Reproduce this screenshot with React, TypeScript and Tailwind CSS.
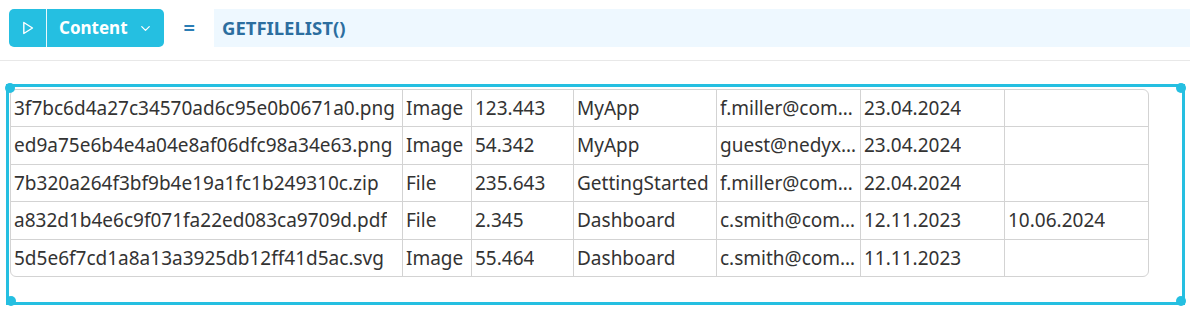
import { ChevronDown } from "lucide-react";

const rows = [
  ["3f7bc6d4a27c34570ad6c95e0b0671a0.png", "Image", "123.443", "MyApp", "f.miller@company.com", "23.04.2024", ""],
  ["ed9a75e6b4e4a04e8af06dfc98a34e63.png", "Image", "54.342", "MyApp", "guest@nedyx.com", "23.04.2024", ""],
  ["7b320a264f3bf9b4e19a1fc1b249310c.zip", "File", "235.643", "GettingStarted", "f.miller@company.com", "22.04.2024", ""],
  ["a832d1b4e6c9f071fa22ed083ca9709d.pdf", "File", "2.345", "Dashboard", "c.smith@company.com", "12.11.2023", "10.06.2024"],
  ["5d5e6f7cd1a8a13a3925db12ff41d5ac.svg", "Image", "55.464", "Dashboard", "c.smith@company.com", "11.11.2023", ""],
];

const colWidths = ["w-[391px]", "w-[69px]", "w-[102px]", "w-[143px]", "w-[144px]", "w-[144px]", "w-[144px]"];

const Handle = ({ pos }: { pos: string }) => (
  <span className={`absolute ${pos} h-[10px] w-[10px] rounded-full bg-[#25bfe1]`} />
);

export default function App() {
  return (
    <div className="h-[310px] w-[1190px] overflow-hidden bg-white font-['Noto_Sans',sans-serif]">
      {/* Toolbar */}
      <div className="flex h-[61px] items-start border-b border-[#e8e8e8] pt-[9px]">
        <div className="ml-[9px] flex h-[38px] items-stretch rounded-[5px] bg-[#25bfe1] text-white">
          <div className="flex w-[38px] items-center justify-center border-r border-[#e9f8fc]">
            <svg width="12" height="14" viewBox="0 0 12 14" fill="none">
              <path d="M1.8 1.5 L10.5 7 L1.8 12.5 Z" stroke="white" strokeWidth="1.4" strokeLinejoin="round" />
            </svg>
          </div>
          <div className="flex items-center pl-[12px] pr-[11px]">
            <span className="text-[17px] font-bold">Content</span>
            <ChevronDown size={15} strokeWidth={2} className="ml-[10px]" />
          </div>
        </div>
        <div className="ml-[20px] flex h-[38px] items-center text-[20px] font-bold text-[#2a7db5]">=</div>
        <div className="ml-[19px] flex h-[38px] flex-1 items-center bg-[#eef8ff] pl-[8px] text-[18.5px] font-bold text-[#2c6e9f]">
          GETFILELIST()
        </div>
      </div>

      {/* Selected table block */}
      <div className="relative ml-[6px] mt-[23px] h-[221px] w-[1179px] border-[3px] border-[#25bfe1] pl-[1px] pt-[2px]">
        <Handle pos="-left-[4px] -top-[4px]" />
        <Handle pos="-right-[4px] -top-[4px]" />
        <Handle pos="-right-[4px] -bottom-[4px]" />
        <Handle pos="-left-[3px] -bottom-[4px]" />
        <div className="w-[1139px] overflow-hidden rounded-[6px] border border-[#d3d3d3] text-[19px] text-[#333]">
          {rows.map((row, i) => (
            <div key={i} className={`flex ${i === 0 ? "h-[36px]" : "h-[37.5px] border-t border-[#d3d3d3]"}`}>
              {row.map((cell, j) => (
                <div
                  key={j}
                  className={`${colWidths[j]} flex min-w-0 shrink-0 items-center px-[3px] ${j > 0 ? "border-l border-[#d3d3d3]" : ""}`}
                >
                  <span className="min-w-0 truncate whitespace-nowrap">{cell}</span>
                </div>
              ))}
            </div>
          ))}
        </div>
      </div>
    </div>
  );
}
